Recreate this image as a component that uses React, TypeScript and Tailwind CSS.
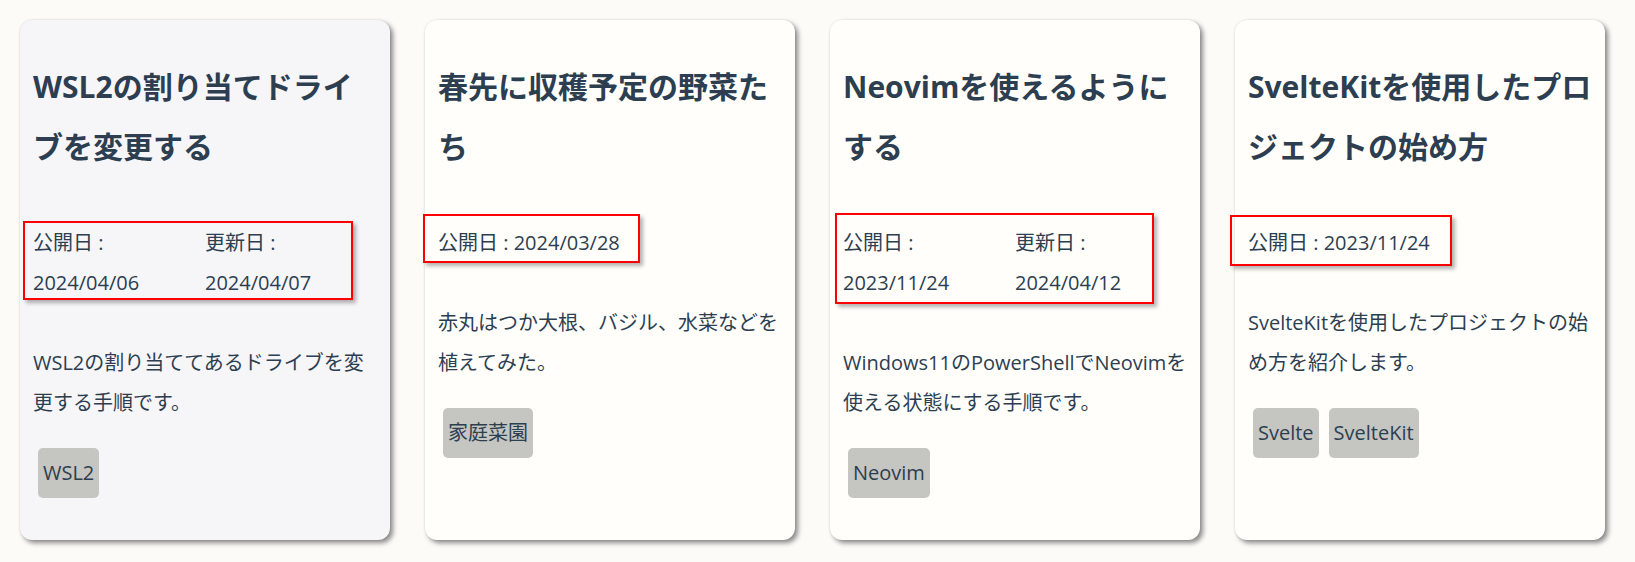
import clsx from "clsx";

type Post = {
  title: string;
  published: string;
  updated?: string;
  description: string;
  tags: string[];
  active?: boolean;
  // hand drawn red annotation frame around the dates
  frame: string;
};

const posts: Post[] = [
  {
    title: "WSL2の割り当てドライブを変更する",
    published: "2024/04/06",
    updated: "2024/04/07",
    description: "WSL2の割り当ててあるドライブを変更する手順です。",
    tags: ["WSL2"],
    active: true,
    frame: "-left-[10px] -top-[2px] w-[330px] h-[79px]",
  },
  {
    title: "春先に収穫予定の野菜たち",
    published: "2024/03/28",
    description: "赤丸はつか大根、バジル、水菜などを植えてみた。",
    tags: ["家庭菜園"],
    frame: "-left-[15px] -top-[9px] w-[217px] h-[49px]",
  },
  {
    title: "Neovimを使えるようにする",
    published: "2023/11/24",
    updated: "2024/04/12",
    description: "Windows11のPowerShellでNeovimを使える状態にする手順です。",
    tags: ["Neovim"],
    frame: "-left-[8px] -top-[10px] w-[319px] h-[91px]",
  },
  {
    title: "SvelteKitを使用したプロジェクトの始め方",
    published: "2023/11/24",
    description: "SvelteKitを使用したプロジェクトの始め方を紹介します。",
    tags: ["Svelte", "SvelteKit"],
    frame: "-left-[18px] -top-[8px] w-[222px] h-[51px]",
  },
];

const PostCard = ({ post }: { post: Post }) => {
  return (
    <article
      className={clsx(
        "flex w-[370px] shrink-0 flex-col rounded-[12px] px-[13px] pt-[37px] pb-[42px] shadow-[3px_3px_5px_rgba(0,0,0,0.45),0_0_2px_rgba(0,0,0,0.12)]",
        post.active ? "bg-[#f6f5f8]" : "bg-[#fffefb]"
      )}
    >
      <h2 className="text-[30px] font-bold leading-[60px]">{post.title}</h2>

      <div className="relative mt-[46px] text-[20px] leading-[40px]">
        <div
          className={clsx(
            "pointer-events-none absolute border-2 border-[#ff0000] shadow-[3px_3px_4px_rgba(0,0,0,0.3)]",
            post.frame
          )}
        />
        {post.updated ? (
          <div className="grid grid-cols-[172px_1fr]">
            <p>
              公開日 : <span className="whitespace-nowrap">{post.published}</span>
            </p>
            <p>
              更新日 : <span className="whitespace-nowrap">{post.updated}</span>
            </p>
          </div>
        ) : (
          <p>公開日 : {post.published}</p>
        )}
      </div>

      <p className="mt-[40px] text-[20px] leading-[40px]">{post.description}</p>

      <div className="mt-[25px] flex flex-wrap">
        {post.tags.map((tag) => (
          <span
            key={tag}
            className="mx-[5px] rounded-[5px] bg-[#c5c5c1] px-[5px] text-[20px] leading-[50px]"
          >
            {tag}
          </span>
        ))}
      </div>
    </article>
  );
};

export default function App() {
  return (
    <div className="min-h-screen bg-[#fcfbf8] font-[Open_Sans,Noto_Sans_CJK_JP,sans-serif] text-[#2c3e50]">
      <div className="flex gap-[35px] pt-[20px] pl-[20px]">
        {posts.map((post) => (
          <PostCard key={post.title} post={post} />
        ))}
      </div>
    </div>
  );
}
